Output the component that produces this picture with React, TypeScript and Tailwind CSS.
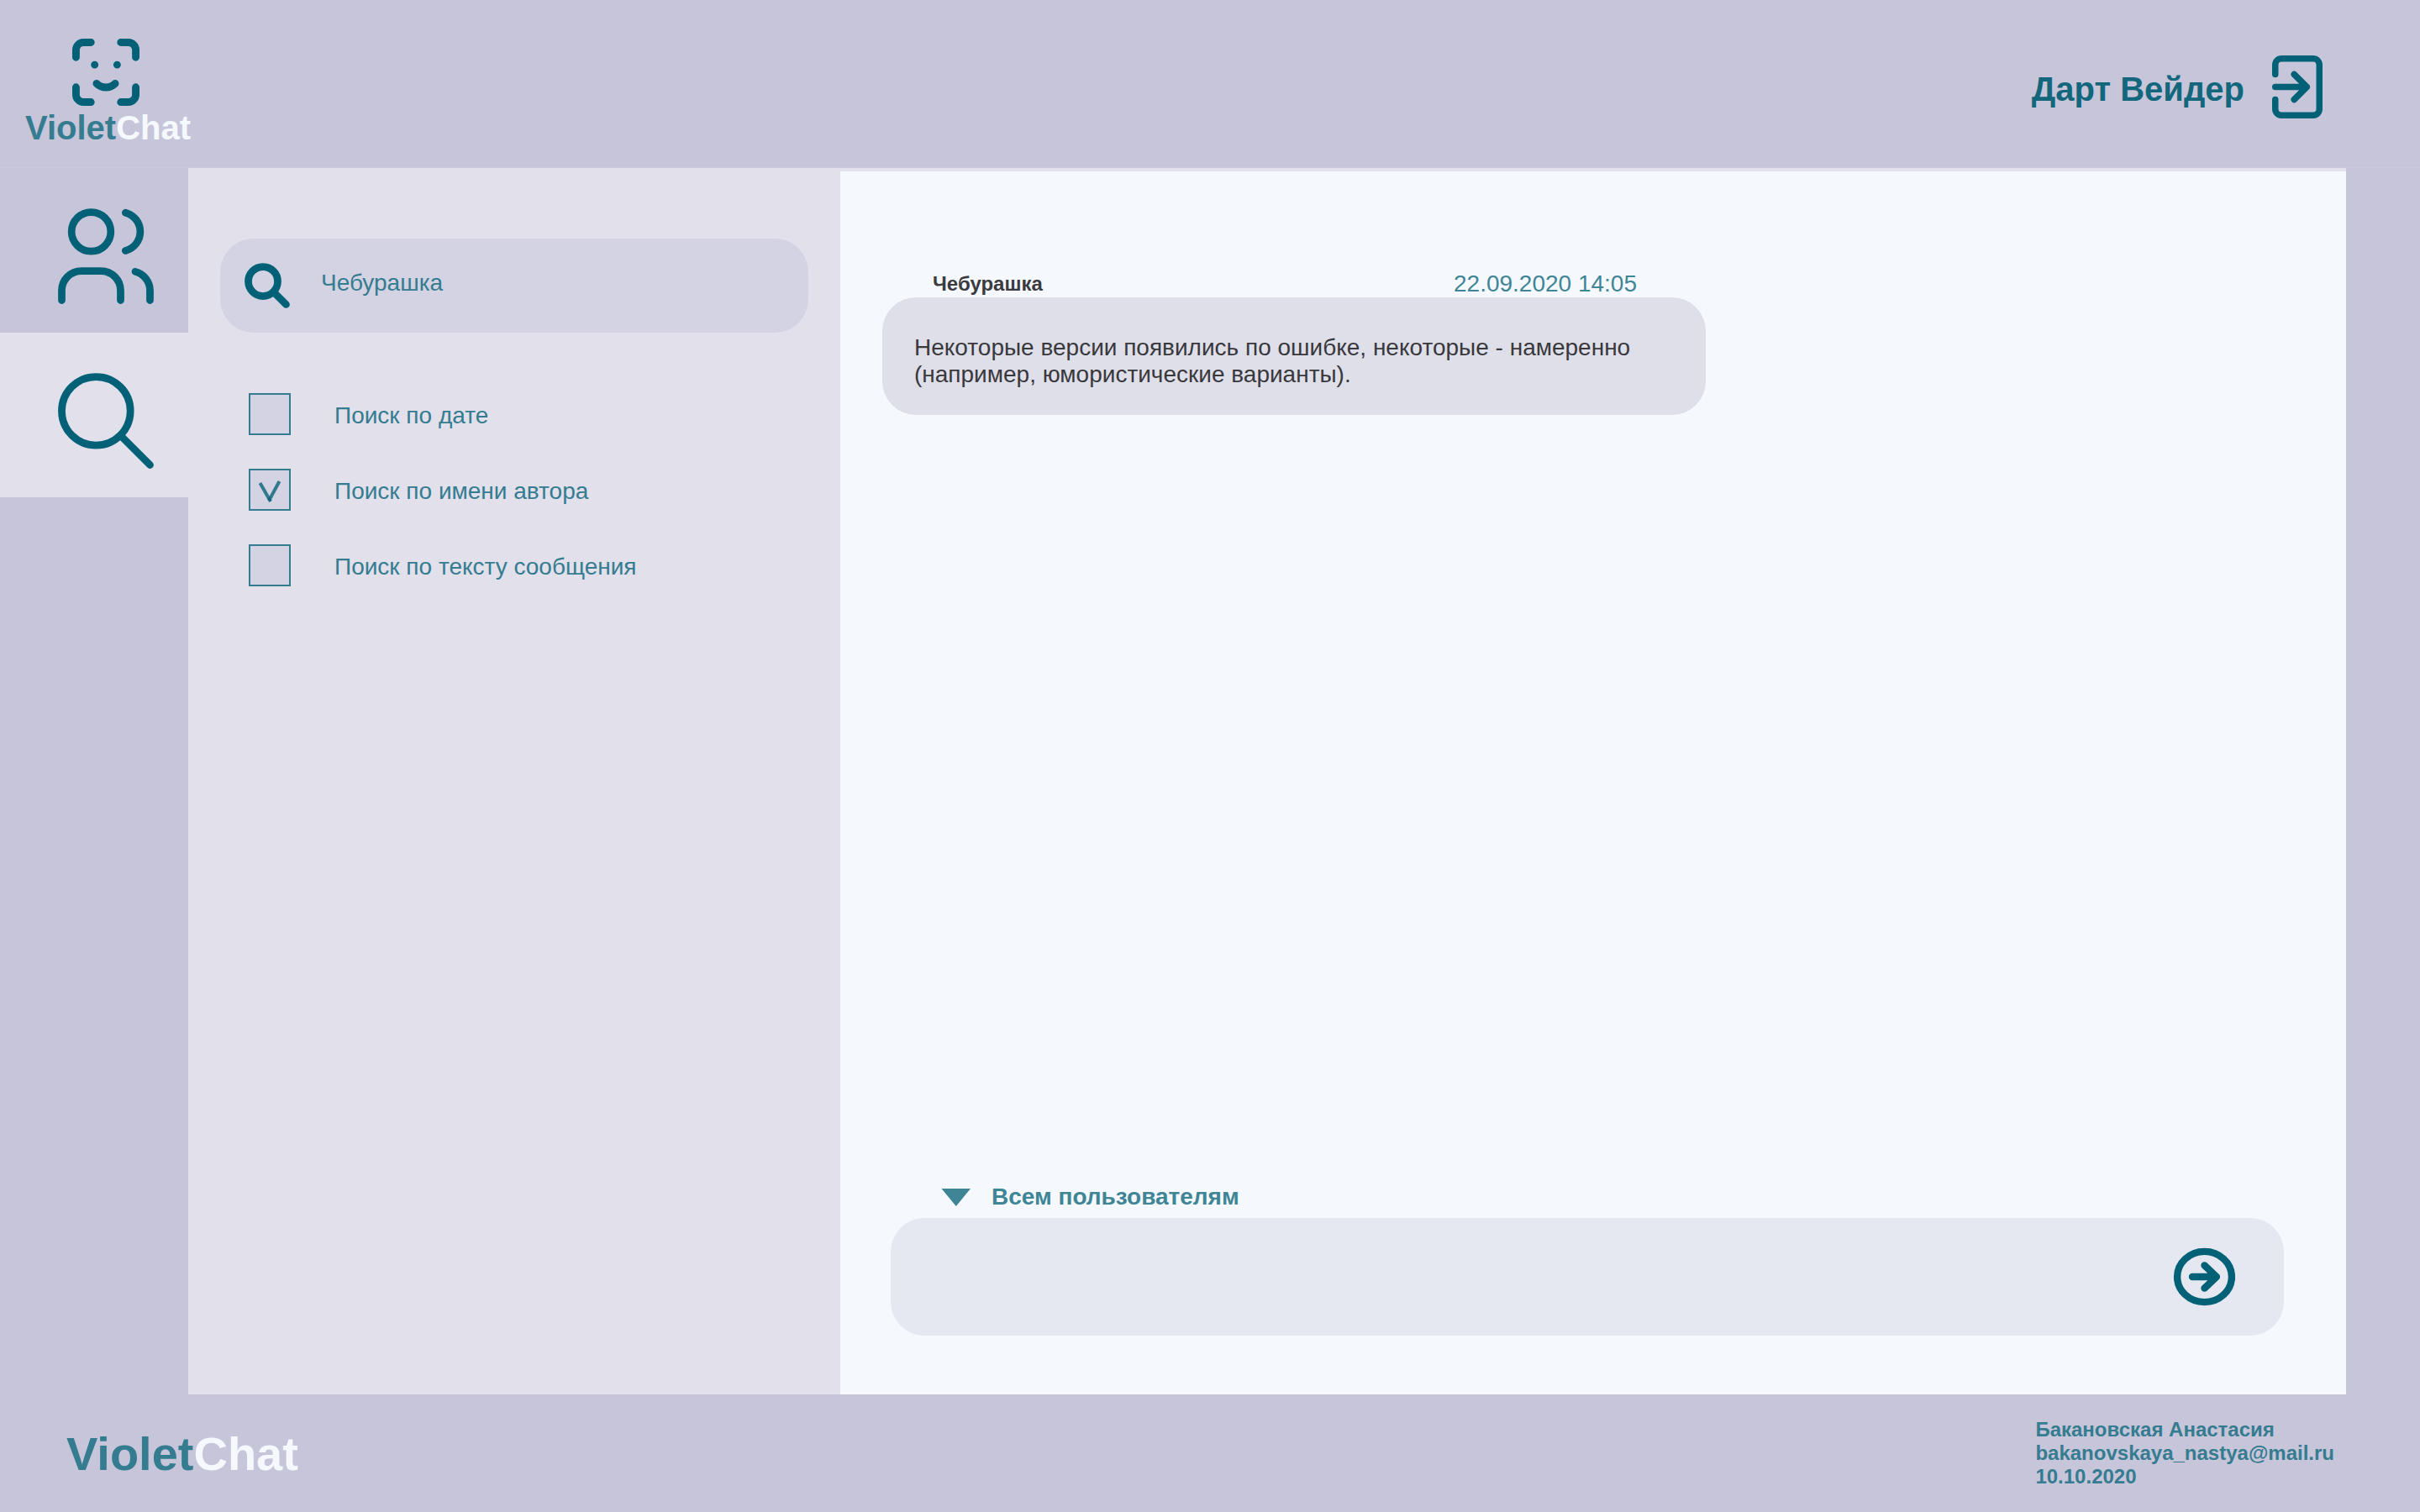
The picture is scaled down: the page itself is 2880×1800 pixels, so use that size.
import { useState } from "react";

const filters = [
  { id: "date", label: "Поиск по дате", checked: false },
  { id: "author", label: "Поиск по имени автора", checked: true },
  { id: "text", label: "Поиск по тексту сообщения", checked: false },
];

function FaceIcon() {
  return (
    <svg className="ml-14 size-20" viewBox="3 3 18 18" fill="none" stroke="currentColor" strokeWidth="2" strokeLinecap="round" strokeLinejoin="round" aria-hidden="true">
      <path d="M4 8v-2a2 2 0 0 1 2 -2h2" />
      <path d="M4 16v2a2 2 0 0 0 2 2h2" />
      <path d="M16 4h2a2 2 0 0 1 2 2v2" />
      <path d="M16 20h2a2 2 0 0 0 2 -2v-2" />
      <path d="M9 10h.01M15 10h.01" />
      <path d="M9.5 15a3.5 3.5 0 0 0 5 0" />
    </svg>
  );
}

function LogoutIcon() {
  return (
    <svg className="h-[75px] w-[60px]" viewBox="0 0 16 20" fill="none" stroke="currentColor" strokeWidth="2" strokeLinecap="round" strokeLinejoin="round" aria-hidden="true">
      <path d="M1 6V3a2 2 0 0 1 2-2h10a2 2 0 0 1 2 2v14a2 2 0 0 1-2 2H3a2 2 0 0 1-2-2v-3" />
      <path d="M1 10h10M7 6l4 4l-4 4" />
    </svg>
  );
}

function UsersIcon() {
  return (
    <svg className="size-[140px]" viewBox="0 0 24 24" fill="none" stroke="currentColor" strokeWidth="1.5" strokeLinecap="round" strokeLinejoin="round" aria-hidden="true">
      <circle cx="9" cy="7" r="4" />
      <path d="M3 21v-2a4 4 0 0 1 4 -4h4a4 4 0 0 1 4 4v2" />
      <path d="M16 3.13a4 4 0 0 1 0 7.75" />
      <path d="M21 21v-2a4 4 0 0 0 -3 -3.85" />
    </svg>
  );
}

function SearchIcon({ className, stroke }: { className: string; stroke: number }) {
  return (
    <svg className={className} viewBox="0 0 24 24" fill="none" stroke="currentColor" strokeWidth={stroke} strokeLinecap="round" strokeLinejoin="round" aria-hidden="true">
      <circle cx="10" cy="10" r="7" />
      <path d="M21 21l-6 -6" />
    </svg>
  );
}

function SendIcon() {
  return (
    <svg className="h-[70px] w-[74px]" viewBox="0 0 74 70" fill="none" stroke="currentColor" strokeWidth="8.4" strokeLinecap="round" strokeLinejoin="round" aria-hidden="true">
      <ellipse cx="37.5" cy="35" rx="32.4" ry="30.1" />
      <path d="M23 35H51.9M37.5 21.4L51.9 35L37.5 48.6" />
    </svg>
  );
}

function FilterOption({ id, label, checked }: { id: string; label: string; checked: boolean }) {
  return (
    <div className="flex items-center gap-[52px]">
      <div className="grid size-[50px]">
        <input
          id={id}
          type="checkbox"
          defaultChecked={checked}
          className="peer col-start-1 row-start-1 size-[50px] appearance-none border-2 border-[#357c90] bg-[#d4d3e3]"
        />
        <svg className="pointer-events-none col-start-1 row-start-1 hidden size-[50px] text-[#026176] peer-checked:block" viewBox="0 0 50 50" fill="none" stroke="currentColor" strokeWidth="4" strokeOpacity="0.78" aria-hidden="true">
          <line x1="13.5" y1="17" x2="26" y2="39" />
          <line x1="36.5" y1="15" x2="24" y2="38" />
        </svg>
      </div>
      <label htmlFor={id} className="pt-1 text-[28px] leading-8 text-[#357c90]">
        {label}
      </label>
    </div>
  );
}

export default function App() {
  const [query, setQuery] = useState("Чебурашка");
  const [draft, setDraft] = useState("");

  return (
    <div className="flex min-h-screen flex-col bg-[#c7c5da] font-['Liberation_Sans',Arial,sans-serif] text-[#026176]">
      <header className="flex h-[200px] items-start justify-between border-b border-[#cbc9dd] pr-[116px] pl-[30px]">
        <div className="pt-[46px]">
          <FaceIcon />
          <div className="mt-[6px] text-[40px] leading-10 font-bold text-[#357c90]">
            Violet<span className="text-[#f5f9fe]">Chat</span>
          </div>
        </div>
        <div className="flex items-center gap-[33px] pt-[66px]">
          <span className="pt-1 text-[40px] leading-10 font-bold text-[#12677c]">Дарт Вейдер</span>
          <button type="button" aria-label="Выйти">
            <LogoutIcon />
          </button>
        </div>
      </header>

      <div className="flex flex-1 pr-[88px]">
        <nav className="flex w-56 shrink-0 flex-col">
          <button type="button" aria-label="Пользователи" className="flex h-[196px] items-start pt-[35px] pl-14">
            <UsersIcon />
          </button>
          <button type="button" aria-label="Поиск" className="flex h-[196px] items-start bg-[#e1e0eb] pt-[35px] pl-14">
            <SearchIcon className="size-[140px]" stroke={1.5} />
          </button>
        </nav>

        <aside className="w-[776px] shrink-0 bg-[#e1e0eb] px-[38px] pt-[84px]">
          <div className="flex h-28 items-center gap-[34px] rounded-[40px] bg-[#d4d3e3] pr-10 pl-[26px]">
            <SearchIcon className="size-[60px] shrink-0" stroke={3.5} />
            <input
              type="text"
              aria-label="Поиск сообщений"
              value={query}
              onChange={(e) => setQuery(e.target.value)}
              className="min-w-0 flex-1 bg-transparent pb-[6px] text-[28px] leading-8 text-[#357c90] outline-none"
            />
          </div>
          <div className="flex flex-col gap-10 pt-[72px] pl-[34px]">
            {filters.map((f) => (
              <FilterOption key={f.id} {...f} />
            ))}
          </div>
        </aside>

        <main className="flex min-w-0 flex-1 flex-col justify-between border-t-4 border-[#e1e0eb] bg-[#f5f9fe] pt-[118px] pr-[74px] pb-[70px] pl-[50px]">
          <article className="max-w-[980px]">
            <div className="flex items-center justify-between pr-[82px] pl-[60px] leading-8">
              <span className="text-[24px] leading-8 font-bold text-[#3b3b3f]">Чебурашка</span>
              <time dateTime="2020-09-22T14:05" className="text-[28px] leading-8 text-[#3f8595]">
                22.09.2020 14:05
              </time>
            </div>
            <p className="rounded-[40px] bg-[#dfdfea] px-[38px] pt-11 pb-8 text-[28px] leading-8 text-[#39383c]">
              Некоторые версии появились по ошибке, некоторые - намеренно (например, юмористические варианты).
            </p>
          </article>

          <form className="pl-[10px]" onSubmit={(e) => e.preventDefault()}>
            <div className="mb-[9px] flex items-center gap-[25px] pl-[60px] text-[#3f8595]">
              <svg className="h-[21px] w-[35px]" viewBox="0 0 35 21" fill="currentColor" aria-hidden="true">
                <path d="M0.5 0H35L17.8 21Z" />
              </svg>
              <select aria-label="Получатель" className="appearance-none bg-transparent text-[28px] leading-8 font-bold outline-none">
                <option>Всем пользователям</option>
              </select>
            </div>
            <div className="flex h-[140px] items-center rounded-[40px] bg-[#e5e8f1] pr-[58px] pl-10">
              <input
                type="text"
                aria-label="Сообщение"
                value={draft}
                onChange={(e) => setDraft(e.target.value)}
                className="min-w-0 flex-1 bg-transparent text-[28px] leading-8 text-[#39383c] outline-none"
              />
              <button type="submit" aria-label="Отправить">
                <SendIcon />
              </button>
            </div>
          </form>
        </main>
      </div>

      <footer className="flex h-[140px] items-center justify-between pr-[102px] pl-[79px] font-bold text-[#357c90]">
        <div className="pt-[2px] text-[56px] leading-none">
          Violet<span className="text-[#f5f9fe]">Chat</span>
        </div>
        <address className="text-[24px] leading-7 not-italic">
          <div>Бакановская Анастасия</div>
          <a href="mailto:bakanovskaya_nastya@mail.ru">bakanovskaya_nastya@mail.ru</a>
          <div>10.10.2020</div>
        </address>
      </footer>
    </div>
  );
}
